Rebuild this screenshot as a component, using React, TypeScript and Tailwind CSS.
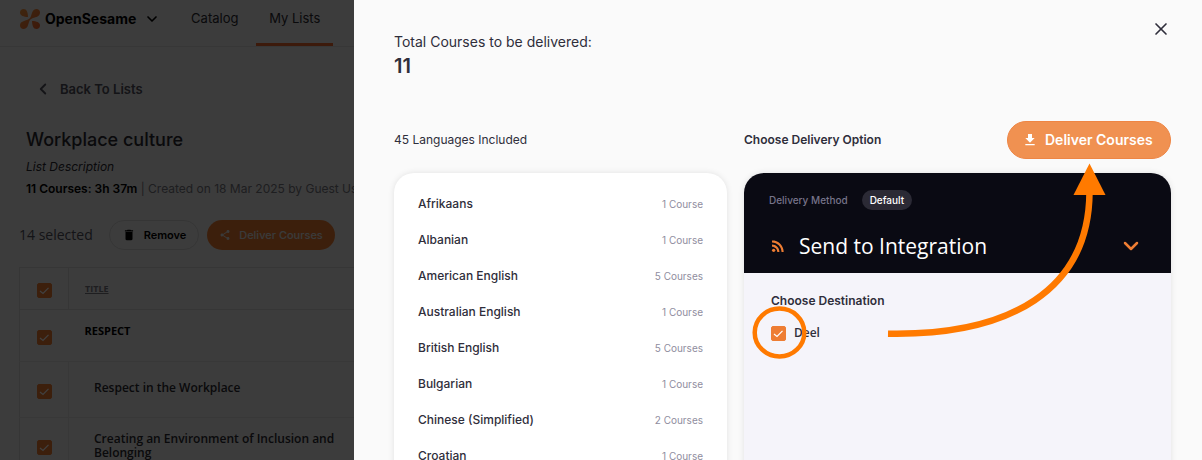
import React, { useState } from 'react';
import { ChevronDown, ChevronLeft, X } from 'lucide-react';
import { MdDelete, MdDownload, MdRssFeed, MdShare } from 'react-icons/md';

const languages = [
  { name: 'Afrikaans', courses: 1 },
  { name: 'Albanian', courses: 1 },
  { name: 'American English', courses: 5 },
  { name: 'Australian English', courses: 1 },
  { name: 'British English', courses: 5 },
  { name: 'Bulgarian', courses: 1 },
  { name: 'Chinese (Simplified)', courses: 2 },
  { name: 'Croatian', courses: 1 },
];

const Logo: React.FC = () => (
  <svg className="w-[22px] h-[22px]" viewBox="0 0 22 22" aria-hidden="true">
    <defs>
      <linearGradient id="petals" x1="0" y1="0" x2="22" y2="22" gradientUnits="userSpaceOnUse">
        <stop offset="0" stopColor="#f79a3e" />
        <stop offset="1" stopColor="#f0602a" />
      </linearGradient>
    </defs>
    <g fill="url(#petals)">
      <path d="M1 4.500C1 2.500 2.500 1 4.500 1C7.800 1 8.800 4.500 9 9C4.500 8.800 1 7.800 1 4.500Z" />
      <path d="M21 4.500C21 2.500 19.500 1 17.500 1C13.500 1 13 5 12 8C11.200 10.300 10.300 11.200 8 12C5 13 1 13.500 1 17.500C1 19.500 2.500 21 4.500 21C8.500 21 9 17 10 14C10.800 11.700 11.700 10.800 14 10C17 9 21 8.500 21 4.500Z" />
      <path d="M21 17.500C21 19.500 19.500 21 17.500 21C14.200 21 13.200 17.500 13 13C17.500 13.200 21 14.200 21 17.500Z" />
    </g>
  </svg>
);

interface CheckboxProps {
  label: string;
  id?: string;
}

const Checkbox: React.FC<CheckboxProps> = ({ label, id }) => {
  const [checked, setChecked] = useState(true);

  return (
    <span className="inline-grid shrink-0 place-items-center align-middle">
      <input
        id={id}
        type="checkbox"
        aria-label={label}
        checked={checked}
        onChange={() => setChecked(!checked)}
        className="col-start-1 row-start-1 appearance-none w-[15px] h-[15px] rounded-xs bg-white border border-[#ee7d33] checked:bg-[#ee7d33]"
      />
      {checked && (
        <svg className="col-start-1 row-start-1 w-[15px] h-[15px] pointer-events-none" viewBox="0 0 15 15" fill="none" stroke="white" strokeWidth="1.2">
          <path d="M3 8L6 10.500L11.500 4.800" />
        </svg>
      )}
    </span>
  );
};

const ListPage: React.FC = () => (
  <div className="min-h-screen bg-[#efefef] text-[#2a2a30]">
    <header className="flex items-center h-[47px] border-b border-[#dcdcdc] pl-[19px]">
      <span className="pb-2"><Logo /></span>
      <button className="flex items-center ml-1 pb-2 text-black">
        <span className="text-sm font-bold">OpenSesame</span>
        <ChevronDown className="w-4 h-4 ml-2" strokeWidth={2.5} />
      </button>
      <nav className="flex self-stretch ml-4 text-[13px]">
        <a href="#catalog" className="flex items-center justify-center w-[77px] pb-2">Catalog</a>
        <a href="#lists" className="flex items-center justify-center w-[77px] pb-[5px] ml-[3px] border-b-3 border-[#ee6a2c]">My Lists</a>
      </nav>
    </header>

    <main className="pl-[19px]">
      <a href="#lists" className="flex items-center gap-2 pt-8 pl-[15px] text-[13px] leading-5 font-semibold text-[#50505c]">
        <ChevronLeft className="w-[18px] h-[18px]" strokeWidth={2.5} />
        Back To Lists
      </a>
      <div className="pl-[7px] pt-[29px]">
        <h1 className="text-lg leading-6 font-medium">Workplace culture</h1>
        <p className="mt-[7px] text-xs leading-4 italic">List Description</p>
        <p className="mt-[6px] text-xs leading-4 whitespace-nowrap text-[#77777f]">
          <strong className="font-semibold text-black">11 Courses: 3h 37m</strong> | Created on 18 Mar 2025 by Guest User
        </p>
      </div>

      <div className="flex items-center mt-[23px]">
        <span className="w-[90px] text-sm font-['Open_Sans',sans-serif] font-medium text-[#50505c]">14 selected</span>
        <button className="flex items-center justify-center gap-2 w-[90px] h-[30px] rounded-full border border-[#d4d4d4] text-[11px] font-semibold text-black">
          <MdDelete className="w-[14px] h-[14px]" />
          Remove
        </button>
        <button className="flex items-center justify-center gap-2 w-32 h-[30px] ml-2 rounded-full bg-[#ee7d33] text-[11px] font-medium text-[#e8e8e8]">
          <MdShare className="w-3 h-3" />
          Deliver Courses
        </button>
      </div>

      <table className="w-full mt-[17px] border-collapse border border-[#d6d6d6] font-['Open_Sans',sans-serif] text-left">
        <thead>
          <tr className="h-[42px] border-b border-[#d6d6d6]">
            <th className="w-[49px] border-r border-[#d6d6d6] text-center"><Checkbox label="Select all" /></th>
            <th className="pl-4 text-[9px] font-bold text-[#77777f]">
              <button className="underline">TITLE</button>
            </th>
          </tr>
        </thead>
        <tbody>
          <tr className="h-[52px] border-b border-[#dedede]">
            <td className="text-center"><Checkbox label="Select Respect" /></td>
            <td className="pl-4 pb-2 text-[11px] font-bold text-black">RESPECT</td>
          </tr>
          <tr className="h-14 border-b border-[#dedede]">
            <td className="border-r border-[#dedede] text-center"><Checkbox label="Select Respect in the Workplace" /></td>
            <td className="pl-[25px] pb-1 text-xs font-semibold">Respect in the Workplace</td>
          </tr>
          <tr className="h-14">
            <td className="border-r border-[#dedede] text-center"><Checkbox label="Select Creating an Environment" /></td>
            <td className="pl-[25px] text-xs leading-[14px] font-semibold">
              <p className="max-w-64">Creating an Environment of Inclusion and Belonging</p>
            </td>
          </tr>
        </tbody>
      </table>
    </main>
  </div>
);

const Annotations: React.FC = () => (
  <svg className="absolute left-0 top-0 w-[427px] h-[260px] overflow-visible pointer-events-none" viewBox="744 121 427 260" preserveAspectRatio="xMinYMin meet" fill="none" aria-hidden="true">
    <ellipse cx="779.5" cy="332.500" rx="24.800" ry="24" stroke="#ff7a00" strokeWidth="4.500" />
    <path d="M888 333.700C1010 336 1089 290 1089.500 192" stroke="#ff7a00" strokeWidth="6.500" />
    <path d="M1089.500 163.500L1105.500 195H1073.500Z" fill="#ff7a00" />
  </svg>
);

const DeliveryPanel: React.FC = () => (
  <section className="relative flex flex-col">
    <div className="flex items-center justify-between h-[38px]">
      <h2 className="text-xs font-semibold">Choose Delivery Option</h2>
      <button className="flex items-center gap-[7px] w-[164px] h-[38px] pl-[14px] rounded-full border border-[#ee8544] bg-[#f09151] text-sm font-semibold text-white">
        <MdDownload className="w-4 h-4" />
        Deliver Courses
      </button>
    </div>

    <div className="grow mt-[14px] rounded-t-[20px] overflow-hidden bg-[#f5f4fa] shadow-[0_0_6px_rgba(0,0,0,0.1)]">
      <div className="h-[100px] px-[25px] pt-[17px] bg-[#0a0a13]">
        <div className="flex items-center gap-[14px] text-[10px] font-medium">
          <span className="text-[#77748a]">Delivery Method</span>
          <span className="flex items-center h-5 px-2 rounded-full bg-[#2b2a35] text-white">Default</span>
        </div>
        <button className="flex items-center w-full mt-5 text-white">
          <MdRssFeed className="w-[18px] h-[18px] text-[#ee7d33]" />
          <span className="ml-3 text-[21px] leading-8 font-['Open_Sans',sans-serif] font-medium">Send to Integration</span>
          <ChevronDown className="w-6 h-6 ml-auto mr-[3px] text-[#ee7d33]" strokeWidth={2.5} />
        </button>
      </div>
      <div className="pl-[27px] pt-5">
        <h3 className="text-xs leading-4 font-semibold">Choose Destination</h3>
        <div className="flex items-center gap-2 mt-4">
          <Checkbox id="deel" label="Deel" />
          <label htmlFor="deel" className="text-xs leading-4 font-['Open_Sans',sans-serif] font-semibold">Deel</label>
        </div>
      </div>
    </div>
    <Annotations />
  </section>
);

const DeliveryDrawer: React.FC = () => (
  <aside className="flex flex-col w-[calc(100%-354px)] h-full pl-10 pr-[31px] pt-[19px] overflow-hidden bg-[#fafafa] text-[#2f2e3b]">
    <div className="flex items-start justify-between">
      <div className="pt-[13px]">
        <p className="text-sm leading-5">Total Courses to be delivered:</p>
        <p className="text-xl leading-7 font-semibold">11</p>
      </div>
      <button aria-label="Close">
        <X className="w-5 h-5" />
      </button>
    </div>

    <div className="grow grid grid-cols-[333fr_427fr] gap-[17px] mt-[41px]">
      <section className="flex flex-col">
        <h2 className="flex items-center h-[38px] text-xs">45 Languages Included</h2>
        <ul className="grow mt-[14px] px-6 pt-[13px] rounded-t-[20px] bg-white shadow-[0_0_6px_rgba(0,0,0,0.1)]">
          {languages.map((language) => (
            <li key={language.name} className="flex items-center justify-between h-9">
              <span className="text-xs font-medium">{language.name}</span>
              <span className="text-[10px] text-[#8f8d9e]">
                {language.courses} {language.courses === 1 ? 'Course' : 'Courses'}
              </span>
            </li>
          ))}
        </ul>
      </section>
      <DeliveryPanel />
    </div>
  </aside>
);

const App: React.FC = () => {
  return (
    <div className="relative h-screen overflow-hidden font-['Inter',sans-serif]">
      <ListPage />
      <div className="absolute inset-0 flex justify-end bg-black/75">
        <DeliveryDrawer />
      </div>
    </div>
  );
};

export default App;
